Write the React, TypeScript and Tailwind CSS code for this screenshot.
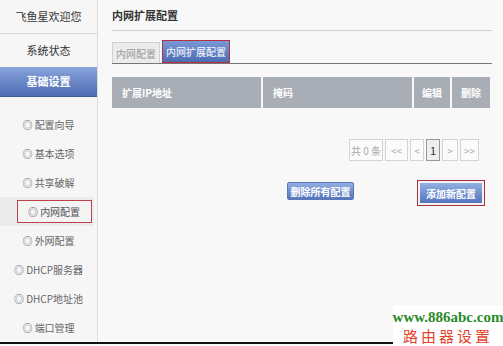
import React from "react"

const FONT = { fontFamily: '"Noto Sans CJK SC", "Liberation Sans", sans-serif' }

const menu = ["配置向导", "基本选项", "共享破解", "内网配置", "外网配置", "DHCP服务器", "DHCP地址池", "端口管理"]

function Sidebar() {
  return (
    <div className="w-[98px] shrink-0 bg-[#f6f6f6] border-r border-[#dcdcdc] flex flex-col">
      <div className="h-[35px] flex items-center justify-center text-[11px] text-[#333] border-b border-[#d6d6d6]">
        飞鱼星欢迎您
      </div>
      <div className="h-[33px] flex items-center justify-center text-[11px] text-[#333]">系统状态</div>
      <div className="h-[31px] flex items-center justify-center text-[11px] font-bold text-white bg-gradient-to-b from-[#8aa4dc] to-[#4d6cb2] border-b border-[#3d5a9c]">
        基础设置
      </div>
      <div className="pt-[13px] flex flex-col">
        {menu.map((m) => {
          const active = m === "内网配置"
          return (
            <div
              key={m}
              className={
                active
                  ? "h-[29px] flex items-center justify-center bg-[#ebebeb] mr-[3px]"
                  : "h-[29px] flex items-center justify-center"
              }
            >
              <span
                className={
                  active
                    ? "text-[10px] text-[#555] border border-[#c0404a] bg-[#f4f4f4] leading-[21px] w-[75px] text-center ml-[14px]"
                    : "text-[10px] text-[#666]"
                }
              >
                ◎ {m}
              </span>
            </div>
          )
        })}
      </div>
    </div>
  )
}

function Pager() {
  const box = "h-[22px] flex items-center justify-center border border-[#d4d4d4] bg-[#fbfbfb] text-[10px] text-[#aaa]"
  return (
    <div className="flex justify-end pr-[13px] pt-[31px] gap-[2px]">
      <div className={box + " w-[34px]"}>共 0 条</div>
      <div className={box + " w-[23px]"}>&lt;&lt;</div>
      <div className={box + " w-[14px]"}>&lt;</div>
      <div className="h-[22px] w-[14px] flex items-center justify-center border border-[#999] bg-[#eee] text-[11px] text-[#333]">1</div>
      <div className={box + " w-[16px]"}>&gt;</div>
      <div className={box + " w-[19px]"}>&gt;&gt;</div>
    </div>
  )
}

export default function App() {
  return (
    <div className="relative w-[503px] h-[346px] overflow-hidden bg-[#f8f8f8]" style={FONT}>
      <div className="flex h-[344px] border-b-2 border-[#111]">
        <Sidebar />
        <div className="flex-1 pl-[14px] pr-[11px]">
          <div className="h-[31px] pt-[7px] text-[11px] font-bold text-[#333] border-b border-[#cfcfcf]">
            内网扩展配置
          </div>
          <div className="mt-[10px] flex items-end gap-[2px] border-b border-[#777] h-[23px]">
            <div className="h-[21px] w-[48px] flex items-center justify-center bg-[#ececec] border border-[#d0d0d0] border-b-0 text-[10px] text-[#999]">
              内网配置
            </div>
            <div className="h-[23px] w-[68px] flex items-center justify-center bg-gradient-to-b from-[#7a98d6] to-[#4c6db4] border-[1.5px] border-[#b03040] text-[10px] text-white">
              内网扩展配置
            </div>
          </div>
          <div className="mt-[13px] flex h-[31px] text-[10px] font-bold text-white gap-[2px]">
            <div className="w-[149px] bg-[#a9aeb6] flex items-center pl-[10px]">扩展IP地址</div>
            <div className="w-[149px] bg-[#a9aeb6] flex items-center pl-[10px]">掩码</div>
            <div className="w-[36px] bg-[#a9aeb6] flex items-center justify-center">编辑</div>
            <div className="w-[38px] bg-[#a9aeb6] flex items-center justify-center">删除</div>
          </div>
          <Pager />
          <div className="mt-[19px] flex items-start">
            <div className="ml-[175px] mt-[2px] h-[18px] w-[67px] flex items-center justify-center rounded-[2px] bg-gradient-to-b from-[#93afe2] to-[#5575bd] border border-[#5a78b8] text-[10px] font-bold text-white whitespace-nowrap">
              删除所有配置
            </div>
            <div className="ml-[63px] h-[26px] w-[68px] border-[1.5px] border-[#a83040] p-[2px] bg-[#f3f3f3]">
              <div className="h-full flex items-center justify-center bg-gradient-to-b from-[#93afe2] to-[#5575bd] text-[10px] font-bold text-white whitespace-nowrap">
                添加新配置
              </div>
            </div>
          </div>
        </div>
      </div>
      <div className="absolute right-0 bottom-0 w-[110px] h-[41px] bg-white flex flex-col items-center pt-[3px]">
        <div className="text-[15px] font-bold leading-[18px] text-[#2a8a2a]" style={{ fontFamily: '"Liberation Serif", serif' }}>
          www.886abc.com
        </div>
        <div className="text-[15px] leading-[19px] tracking-[3px] text-[#e2452e]" style={{ fontFamily: '"Noto Sans CJK SC", serif' }}>
          路由器设置
        </div>
      </div>
    </div>
  )
}
